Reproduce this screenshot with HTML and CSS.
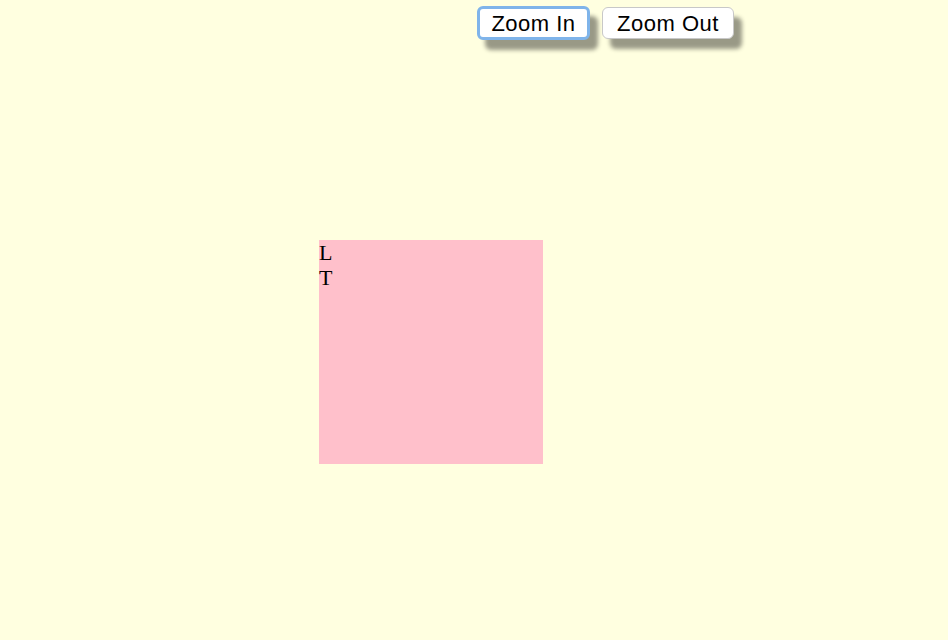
FILE: index.html
```html
<!DOCTYPE html>
<html>
<head>
<meta charset="utf-8">
<link rel="stylesheet" href="styles.css">
</head>
<body>
<div class="toolbar">
  <button class="btn btn-focus">Zoom In</button>
  <button class="btn btn-plain">Zoom Out</button>
</div>
<div class="stage">
  <div class="box">L<br>T</div>
</div>
</body>
</html>
```
FILE: styles.css
```css
html, body {
  margin: 0;
  padding: 0;
  background: #ffffe0;
  width: 948px;
  height: 640px;
  overflow: hidden;
}
.toolbar {
  display: flex;
  align-items: center;
  gap: 12px;
  padding: 6px 0 0 477px;
  height: 34px;
}
.btn {
  font-family: "Liberation Sans", Arial, sans-serif;
  font-size: 22px;
  letter-spacing: 0.5px;
  color: #000;
  background: #fff;
  border-radius: 6px;
  padding: 2px 0 0 0;
  box-shadow: 8px 10px 4px rgba(0, 0, 0, 0.4);
  line-height: 1;
}
.btn-focus {
  border: 3px solid #7fb4ea;
  height: 34px;
  width: 113px;
}
.btn-plain {
  border: 1px solid #c8c8c8;
  height: 32px;
  width: 132px;
}
.stage {
  padding: 200px 0 0 319px;
}
.box {
  width: 224px;
  height: 224px;
  background: #ffc0cb;
  font-family: "Liberation Serif", "Times New Roman", serif;
  font-size: 22px;
  line-height: 25px;
  color: #000;
}
```
